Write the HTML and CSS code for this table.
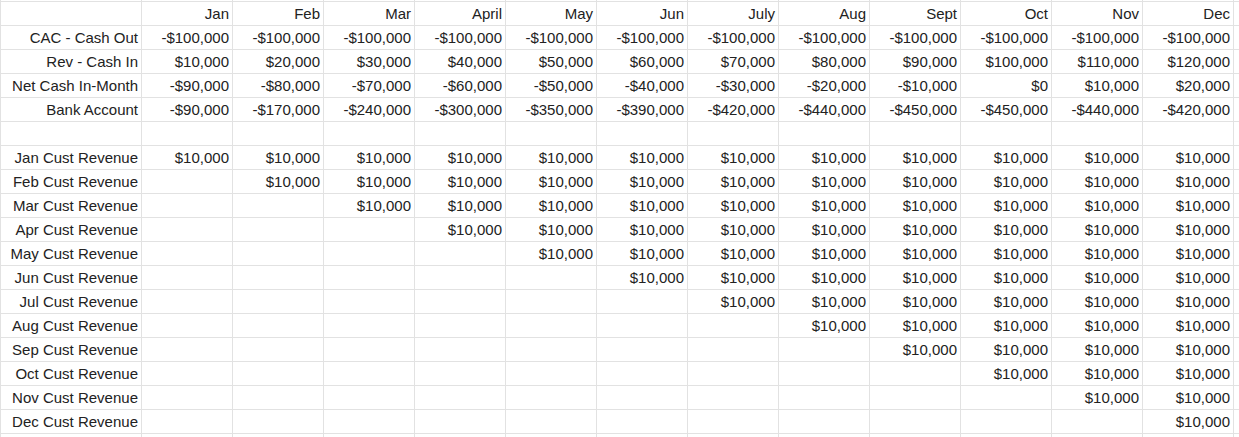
FILE: index.html
```html
<!DOCTYPE html>
<html>
<head>
<meta charset="utf-8">
<link rel="stylesheet" href="styles.css">
</head>
<body>
<div class="sheet">
  <div class="row"><div class="c"></div><div class="c"></div><div class="c"></div><div class="c"></div><div class="c"></div><div class="c"></div><div class="c"></div><div class="c"></div><div class="c"></div><div class="c"></div><div class="c"></div><div class="c"></div><div class="c"></div><div class="c"></div></div>
  <div class="row"><div class="c"></div><div class="c">Jan</div><div class="c">Feb</div><div class="c">Mar</div><div class="c">April</div><div class="c">May</div><div class="c">Jun</div><div class="c">July</div><div class="c">Aug</div><div class="c">Sept</div><div class="c">Oct</div><div class="c">Nov</div><div class="c">Dec</div><div class="c"></div></div>
  <div class="row"><div class="c">CAC - Cash Out</div><div class="c">-$100,000</div><div class="c">-$100,000</div><div class="c">-$100,000</div><div class="c">-$100,000</div><div class="c">-$100,000</div><div class="c">-$100,000</div><div class="c">-$100,000</div><div class="c">-$100,000</div><div class="c">-$100,000</div><div class="c">-$100,000</div><div class="c">-$100,000</div><div class="c">-$100,000</div><div class="c"></div></div>
  <div class="row"><div class="c">Rev - Cash In</div><div class="c">$10,000</div><div class="c">$20,000</div><div class="c">$30,000</div><div class="c">$40,000</div><div class="c">$50,000</div><div class="c">$60,000</div><div class="c">$70,000</div><div class="c">$80,000</div><div class="c">$90,000</div><div class="c">$100,000</div><div class="c">$110,000</div><div class="c">$120,000</div><div class="c"></div></div>
  <div class="row"><div class="c">Net Cash In-Month</div><div class="c">-$90,000</div><div class="c">-$80,000</div><div class="c">-$70,000</div><div class="c">-$60,000</div><div class="c">-$50,000</div><div class="c">-$40,000</div><div class="c">-$30,000</div><div class="c">-$20,000</div><div class="c">-$10,000</div><div class="c">$0</div><div class="c">$10,000</div><div class="c">$20,000</div><div class="c"></div></div>
  <div class="row"><div class="c">Bank Account</div><div class="c">-$90,000</div><div class="c">-$170,000</div><div class="c">-$240,000</div><div class="c">-$300,000</div><div class="c">-$350,000</div><div class="c">-$390,000</div><div class="c">-$420,000</div><div class="c">-$440,000</div><div class="c">-$450,000</div><div class="c">-$450,000</div><div class="c">-$440,000</div><div class="c">-$420,000</div><div class="c"></div></div>
  <div class="row"><div class="c"></div><div class="c"></div><div class="c"></div><div class="c"></div><div class="c"></div><div class="c"></div><div class="c"></div><div class="c"></div><div class="c"></div><div class="c"></div><div class="c"></div><div class="c"></div><div class="c"></div><div class="c"></div></div>
  <div class="row"><div class="c">Jan Cust Revenue</div><div class="c">$10,000</div><div class="c">$10,000</div><div class="c">$10,000</div><div class="c">$10,000</div><div class="c">$10,000</div><div class="c">$10,000</div><div class="c">$10,000</div><div class="c">$10,000</div><div class="c">$10,000</div><div class="c">$10,000</div><div class="c">$10,000</div><div class="c">$10,000</div><div class="c"></div></div>
  <div class="row"><div class="c">Feb Cust Revenue</div><div class="c"></div><div class="c">$10,000</div><div class="c">$10,000</div><div class="c">$10,000</div><div class="c">$10,000</div><div class="c">$10,000</div><div class="c">$10,000</div><div class="c">$10,000</div><div class="c">$10,000</div><div class="c">$10,000</div><div class="c">$10,000</div><div class="c">$10,000</div><div class="c"></div></div>
  <div class="row"><div class="c">Mar Cust Revenue</div><div class="c"></div><div class="c"></div><div class="c">$10,000</div><div class="c">$10,000</div><div class="c">$10,000</div><div class="c">$10,000</div><div class="c">$10,000</div><div class="c">$10,000</div><div class="c">$10,000</div><div class="c">$10,000</div><div class="c">$10,000</div><div class="c">$10,000</div><div class="c"></div></div>
  <div class="row"><div class="c">Apr Cust Revenue</div><div class="c"></div><div class="c"></div><div class="c"></div><div class="c">$10,000</div><div class="c">$10,000</div><div class="c">$10,000</div><div class="c">$10,000</div><div class="c">$10,000</div><div class="c">$10,000</div><div class="c">$10,000</div><div class="c">$10,000</div><div class="c">$10,000</div><div class="c"></div></div>
  <div class="row"><div class="c">May Cust Revenue</div><div class="c"></div><div class="c"></div><div class="c"></div><div class="c"></div><div class="c">$10,000</div><div class="c">$10,000</div><div class="c">$10,000</div><div class="c">$10,000</div><div class="c">$10,000</div><div class="c">$10,000</div><div class="c">$10,000</div><div class="c">$10,000</div><div class="c"></div></div>
  <div class="row"><div class="c">Jun Cust Revenue</div><div class="c"></div><div class="c"></div><div class="c"></div><div class="c"></div><div class="c"></div><div class="c">$10,000</div><div class="c">$10,000</div><div class="c">$10,000</div><div class="c">$10,000</div><div class="c">$10,000</div><div class="c">$10,000</div><div class="c">$10,000</div><div class="c"></div></div>
  <div class="row"><div class="c">Jul Cust Revenue</div><div class="c"></div><div class="c"></div><div class="c"></div><div class="c"></div><div class="c"></div><div class="c"></div><div class="c">$10,000</div><div class="c">$10,000</div><div class="c">$10,000</div><div class="c">$10,000</div><div class="c">$10,000</div><div class="c">$10,000</div><div class="c"></div></div>
  <div class="row"><div class="c">Aug Cust Revenue</div><div class="c"></div><div class="c"></div><div class="c"></div><div class="c"></div><div class="c"></div><div class="c"></div><div class="c"></div><div class="c">$10,000</div><div class="c">$10,000</div><div class="c">$10,000</div><div class="c">$10,000</div><div class="c">$10,000</div><div class="c"></div></div>
  <div class="row"><div class="c">Sep Cust Revenue</div><div class="c"></div><div class="c"></div><div class="c"></div><div class="c"></div><div class="c"></div><div class="c"></div><div class="c"></div><div class="c"></div><div class="c">$10,000</div><div class="c">$10,000</div><div class="c">$10,000</div><div class="c">$10,000</div><div class="c"></div></div>
  <div class="row"><div class="c">Oct Cust Revenue</div><div class="c"></div><div class="c"></div><div class="c"></div><div class="c"></div><div class="c"></div><div class="c"></div><div class="c"></div><div class="c"></div><div class="c"></div><div class="c">$10,000</div><div class="c">$10,000</div><div class="c">$10,000</div><div class="c"></div></div>
  <div class="row"><div class="c">Nov Cust Revenue</div><div class="c"></div><div class="c"></div><div class="c"></div><div class="c"></div><div class="c"></div><div class="c"></div><div class="c"></div><div class="c"></div><div class="c"></div><div class="c"></div><div class="c">$10,000</div><div class="c">$10,000</div><div class="c"></div></div>
  <div class="row"><div class="c">Dec Cust Revenue</div><div class="c"></div><div class="c"></div><div class="c"></div><div class="c"></div><div class="c"></div><div class="c"></div><div class="c"></div><div class="c"></div><div class="c"></div><div class="c"></div><div class="c"></div><div class="c">$10,000</div><div class="c"></div></div>
  <div class="row"><div class="c"></div><div class="c"></div><div class="c"></div><div class="c"></div><div class="c"></div><div class="c"></div><div class="c"></div><div class="c"></div><div class="c"></div><div class="c"></div><div class="c"></div><div class="c"></div><div class="c"></div><div class="c"></div></div>
</div>
</body>
</html>
```

FILE: styles.css
```css
html, body {
  margin: 0;
  padding: 0;
  background: #ffffff;
  overflow: hidden;
}
.sheet {
  display: grid;
  grid-template-columns: 140px repeat(12, 90px) 20px;
  grid-template-rows: 1px repeat(18, 23px) 23px;
  gap: 1px;
  padding-left: 1px;
  background: #e2e2e2;
  width: max-content;
  height: 437px;
  overflow: hidden;
}
.row {
  display: contents;
}
.c {
  background: #ffffff;
  font-family: "Liberation Sans", Arial, sans-serif;
  font-size: 15px;
  line-height: 23px;
  color: #222222;
  text-align: right;
  padding-right: 3px;
  white-space: nowrap;
  overflow: hidden;
}
```
